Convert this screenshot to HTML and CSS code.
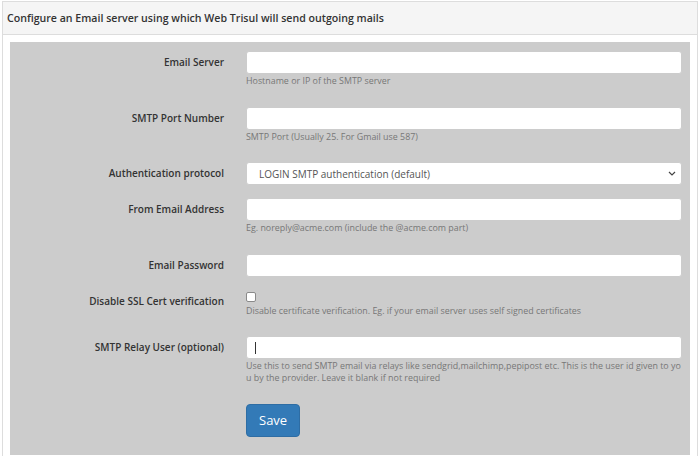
FILE: index.html
```html
<!DOCTYPE html>
<html>
<head>
<meta charset="utf-8">
<link rel="stylesheet" href="styles.css">
</head>
<body>
<div class="panel">
  <div class="panel-head">Configure an Email server using which Web Trisul will send outgoing mails</div>
  <div class="panel-body">
    <form class="form-box">
      <div class="row">
        <label class="lbl">Email Server</label>
        <div class="field">
          <input class="ctl" type="text">
          <div class="help">Hostname or IP of the SMTP server</div>
        </div>
      </div>
      <div class="row">
        <label class="lbl">SMTP Port Number</label>
        <div class="field">
          <input class="ctl" type="text">
          <div class="help">SMTP Port (Usually 25. For Gmail use 587)</div>
        </div>
      </div>
      <div class="row">
        <label class="lbl">Authentication protocol</label>
        <div class="field">
          <select class="ctl sel">
            <option>LOGIN SMTP authentication (default)</option>
          </select>
        </div>
      </div>
      <div class="row">
        <label class="lbl">From Email Address</label>
        <div class="field">
          <input class="ctl" type="text">
          <div class="help">Eg. noreply@acme.com (include the @acme.com part)</div>
        </div>
      </div>
      <div class="row">
        <label class="lbl">Email Password</label>
        <div class="field">
          <input class="ctl" type="password">
        </div>
      </div>
      <div class="row">
        <label class="lbl">Disable SSL Cert verification</label>
        <div class="field">
          <input class="chk" type="checkbox">
          <div class="help help-chk">Disable certificate verification. Eg. if your email server uses self signed certificates</div>
        </div>
      </div>
      <div class="row">
        <label class="lbl">SMTP Relay User (optional)</label>
        <div class="field">
          <div class="caret-wrap"><input class="ctl" type="text"></div>
          <div class="help help-wrap">Use this to send SMTP email via relays like sendgrid,mailchimp,pepipost etc. This is the user id given to you by the provider. Leave it blank if not required</div>
        </div>
      </div>
      <div class="row row-btn">
        <div class="lbl"></div>
        <div class="field">
          <button type="button" class="btn">Save</button>
        </div>
      </div>
    </form>
  </div>
</div>
</body>
</html>
```

FILE: styles.css
```css
html, body {
  margin: 0;
  padding: 0;
  background: #fff;
  font-family: "Open Sans", "Liberation Sans", sans-serif;
  color: #333;
}
.panel {
  margin: 1px 2px 0 2px;
  border: 1px solid #ddd;
  border-bottom: none;
}
.panel-head {
  height: 32px;
  line-height: 32px;
  padding-left: 4px;
  background: #f5f5f5;
  border-bottom: 1px solid #ddd;
  font-size: 10.6px;
  font-weight: 600;
  color: #333;
}
.panel-body {
  padding: 7px 7px 1px 7px;
}
.form-box {
  margin: 0;
  background: #ccc;
  padding: 9px 8px 18px 0;
  display: flex;
  flex-direction: column;
  gap: 13px;
}
.row {
  display: flex;
  gap: 22px;
}
.lbl {
  width: 214px;
  flex: none;
  text-align: right;
  font-size: 10px;
  font-weight: 600;
  line-height: 23px;
  color: #333;
}
.field {
  flex: 1;
  min-width: 0;
  display: flex;
  flex-direction: column;
}
.ctl {
  display: block;
  box-sizing: border-box;
  width: 100%;
  height: 23px;
  margin: 0;
  border: 1px solid #ccc;
  border-radius: 3px;
  background: #fff;
  padding: 0 9px;
  font-family: "Open Sans", "Liberation Sans", sans-serif;
  font-size: 10px;
  color: #555;
  outline: none;
}
.sel {
  appearance: none;
  -webkit-appearance: none;
  padding-left: 12px;
  background: #fff url("data:image/svg+xml;utf8,<svg xmlns='http://www.w3.org/2000/svg' width='8' height='5' viewBox='0 0 8 5'><path d='M1 1l3 3 3-3' fill='none' stroke='%23444' stroke-width='1.2'/></svg>") no-repeat right 5px center;
}
.help {
  margin: 1px 0 6.5px 0;
  font-size: 8.9px;
  line-height: 12px;
  color: #777;
}
.help-wrap {
  word-break: break-all;
  margin-bottom: 6.5px;
}
.chk {
  appearance: none;
  -webkit-appearance: none;
  width: 10px;
  height: 10px;
  margin: 2px 0 0 0;
  box-sizing: border-box;
  border: 1px solid #8a8a8a;
  border-radius: 2px;
  background: #fff;
}
.help-chk {
  margin-top: 3px;
}
.caret-wrap {
  position: relative;
}
.caret-wrap::after {
  content: "";
  position: absolute;
  left: 9px;
  top: 6px;
  width: 1px;
  height: 12px;
  background: #333;
}
.btn {
  align-self: flex-start;
  height: 33px;
  padding: 0 12px;
  border: 1px solid #2e6da4;
  border-radius: 4px;
  background: #337ab7;
  color: #fff;
  font-family: "Open Sans", "Liberation Sans", sans-serif;
  font-size: 13px;
}
```
